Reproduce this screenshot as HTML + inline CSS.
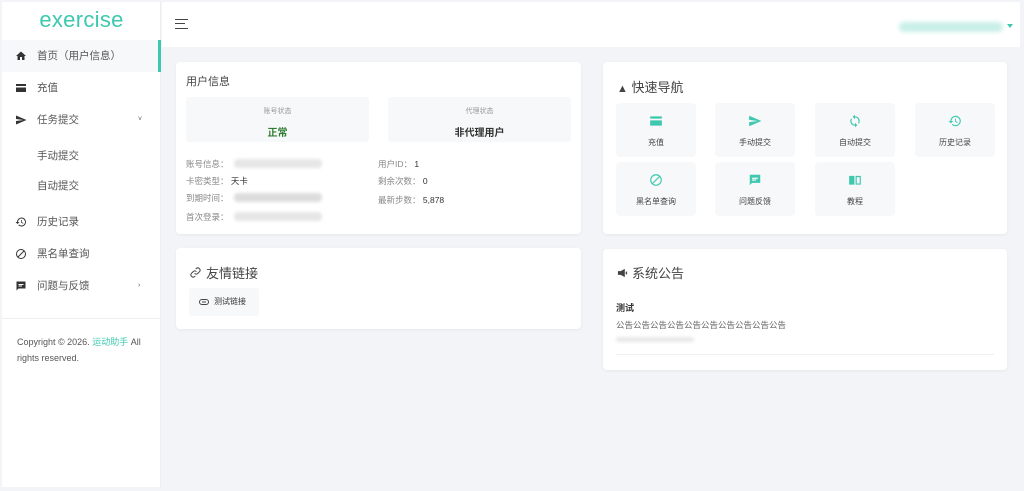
<!DOCTYPE html>
<html><head><meta charset="utf-8"><style>
*{box-sizing:border-box;margin:0;padding:0}
body{width:1024px;height:491px;background:#f3f4f7;font-family:"Liberation Sans","Noto Sans CJK SC",sans-serif;color:#444;position:relative;overflow:hidden;font-size:10px}
.side{position:absolute;left:2px;top:2px;width:159px;height:485px;background:#fff;border-right:1px solid #eceef1}
.logo{position:absolute;left:0;width:159px;top:5px;text-align:center;color:#3ec8b0;font-size:22px;letter-spacing:.3px}
.item{position:absolute;left:0;width:159px;height:32px;line-height:32px;font-size:10.5px;color:#555}
.item svg{position:absolute;left:13px;top:10px}
.item span{position:absolute;left:35px}
.act{background:#f7f8f9;border-right:3px solid #3ec8b0}
.hdr{position:absolute;left:162px;top:2px;width:858px;height:45px;background:#fff}
.card{position:absolute;background:#fff;border-radius:4px;box-shadow:0 1px 3px rgba(0,0,0,.05)}
.blur{position:absolute;height:9px;background:#e6e6e6;border-radius:4px;filter:blur(1.5px)}
.stat{position:absolute;top:35px;width:183px;height:45px;background:#f7f8f9;border-radius:3px;text-align:center}
.stat .t{font-size:7px;color:#999;margin-top:9px}
.stat .v{font-size:10px;font-weight:bold;margin-top:8px}
.lbl{position:absolute;font-size:8.5px;color:#888}
.lbl b{font-weight:normal;color:#333}
.nav{position:absolute;width:80px;height:54px;background:#f7f8f9;border-radius:4px;text-align:center}
.nav svg{position:absolute;left:33px;top:11px}
.nav div{position:absolute;top:34px;width:80px;font-size:8px;color:#444}
h3{position:absolute;font-weight:normal;color:#444}
</style></head><body>
<div class="side">
<div class="logo">exercise</div>
<div class="item act" style="top:38px"><svg width="12" height="12" viewBox="0 0 24 24"><path d="M10 20v-6h4v6h5v-8h3L12 3 2 12h3v8z" fill="#333"/></svg><span>首页（用户信息）</span></div>
<div class="item" style="top:70px"><svg width="12" height="12" viewBox="0 0 24 24"><path d="M2 4h20v16H2zM2 8v3h20V8z" fill="#333" fill-rule="evenodd"/></svg><span>充值</span></div>
<div class="item" style="top:102px"><svg width="12" height="12" viewBox="0 0 24 24"><path d="M2 21l21-9L2 3v7l15 2-15 2z" fill="#333"/></svg><span>任务提交</span><span style="left:136px;font-size:7px">˅</span></div>
<div class="item" style="top:138px"><span>手动提交</span></div>
<div class="item" style="top:168px"><span>自动提交</span></div>
<div class="item" style="top:204px"><svg width="12" height="12" viewBox="0 0 24 24"><path d="M13 3a9 9 0 0 0-9 9H1l4 4 4-4H6a7 7 0 1 1 2 5l-1.4 1.4A9 9 0 1 0 13 3zm-1 5v5l4 2.5.8-1.3-3.3-2V8z" fill="#333"/></svg><span>历史记录</span></div>
<div class="item" style="top:236px"><svg width="12" height="12" viewBox="0 0 24 24"><circle cx="12" cy="12" r="9" fill="none" stroke="#333" stroke-width="2"/><path d="M6 18L18 6" stroke="#333" stroke-width="2"/></svg><span>黑名单查询</span></div>
<div class="item" style="top:268px"><svg width="12" height="12" viewBox="0 0 24 24"><path d="M3 3h18v14H7l-4 4zM7 8h10v2H7zm0 3h7v2H7z" fill="#333" fill-rule="evenodd"/></svg><span>问题与反馈</span><span style="left:136px;font-size:7px">›</span></div>
<div style="position:absolute;top:316px;left:0;width:159px;border-top:1px solid #eee"></div>
<div style="position:absolute;top:332px;left:15px;width:140px;font-size:9px;line-height:16px;color:#555">Copyright © 2026. <span style="color:#3ec8b0">运动助手</span> All rights reserved.</div>
</div>
<div class="hdr">
<div style="position:absolute;left:13px;top:17px;width:13px;height:10px;border-top:1.5px solid #444;border-bottom:1.5px solid #444"><div style="margin-top:3px;width:10px;border-top:1.5px solid #444"></div></div>
<div style="position:absolute;left:737px;top:20px;width:104px;height:10px;background:#c8efe8;border-radius:5px;filter:blur(2px)"></div>
<div style="position:absolute;left:845px;top:22px;border:3px solid transparent;border-top:4px solid #3ec8b0"></div>
</div>

<div class="card" style="left:176px;top:62px;width:405px;height:172px">
<h3 style="left:10px;top:11px;font-size:11px">用户信息</h3>
<div class="stat" style="left:10px"><div class="t">账号状态</div><div class="v" style="color:#2e7d32">正常</div></div>
<div class="stat" style="left:212px"><div class="t">代理状态</div><div class="v" style="color:#333">非代理用户</div></div>
<div class="lbl" style="left:10px;top:96px">账号信息：</div><div class="blur" style="left:58px;top:97px;width:88px"></div>
<div class="lbl" style="left:10px;top:113px">卡密类型： <b>天卡</b></div>
<div class="lbl" style="left:10px;top:130px">到期时间：</div><div class="blur" style="left:58px;top:131px;width:88px;background:#ddd"></div>
<div class="lbl" style="left:10px;top:149px">首次登录：</div><div class="blur" style="left:58px;top:150px;width:88px"></div>
<div class="lbl" style="left:202px;top:96px">用户ID： <b>1</b></div>
<div class="lbl" style="left:202px;top:113px">剩余次数： <b>0</b></div>
<div class="lbl" style="left:202px;top:132px">最新步数： <b>5,878</b></div>
</div>

<div class="card" style="left:603px;top:62px;width:404px;height:172px">
<h3 style="left:14px;top:15px;font-size:13px"><span style="font-size:11px">▲</span> 快速导航</h3>
<div class="nav" style="left:13px;top:41px"><svg width="14" height="14" viewBox="0 0 24 24"><path d="M2 4h20v16H2zM2 8v3h20V8z" fill="#3ec8b0" fill-rule="evenodd"/></svg><div>充值</div></div>
<div class="nav" style="left:112px;top:41px"><svg width="14" height="14" viewBox="0 0 24 24"><path d="M2 21l21-9L2 3v7l15 2-15 2z" fill="#3ec8b0"/></svg><div>手动提交</div></div>
<div class="nav" style="left:212px;top:41px"><svg width="14" height="14" viewBox="0 0 24 24"><path d="M12 4V1L8 5l4 4V6a6 6 0 0 1 5.2 9l1.5 1.5A8 8 0 0 0 12 4zm0 14a6 6 0 0 1-5.2-9L5.3 7.5A8 8 0 0 0 12 20v3l4-4-4-4z" fill="#3ec8b0"/></svg><div>自动提交</div></div>
<div class="nav" style="left:312px;top:41px"><svg width="14" height="14" viewBox="0 0 24 24"><path d="M13 3a9 9 0 0 0-9 9H1l4 4 4-4H6a7 7 0 1 1 2 5l-1.4 1.4A9 9 0 1 0 13 3zm-1 5v5l4 2.5.8-1.3-3.3-2V8z" fill="#3ec8b0"/></svg><div>历史记录</div></div>
<div class="nav" style="left:13px;top:100px"><svg width="14" height="14" viewBox="0 0 24 24"><circle cx="12" cy="12" r="9" fill="none" stroke="#3ec8b0" stroke-width="2"/><path d="M6 18L18 6" stroke="#3ec8b0" stroke-width="2"/></svg><div>黑名单查询</div></div>
<div class="nav" style="left:112px;top:100px"><svg width="14" height="14" viewBox="0 0 24 24"><path d="M3 3h18v14H7l-4 4zM7 8h10v2H7zm0 3h7v2H7z" fill="#3ec8b0" fill-rule="evenodd"/></svg><div>问题反馈</div></div>
<div class="nav" style="left:212px;top:100px"><svg width="14" height="14" viewBox="0 0 24 24"><path d="M2 5h9v15H2zm11 0h9v15h-9zm2 2v11h5V7z" fill="#3ec8b0" fill-rule="evenodd"/></svg><div>教程</div></div>
</div>

<div class="card" style="left:176px;top:248px;width:405px;height:81px">
<svg style="position:absolute;left:14px;top:19px" width="11" height="11" viewBox="0 0 24 24"><path d="M10 14a5 5 0 0 0 7 0l4-4a5 5 0 0 0-7-7l-1.5 1.5M14 10a5 5 0 0 0-7 0l-4 4a5 5 0 0 0 7 7l1.5-1.5" fill="none" stroke="#444" stroke-width="2.2"/></svg>
<h3 style="left:30px;top:15px;font-size:13px">友情链接</h3>
<div style="position:absolute;left:13px;top:40px;width:70px;height:28px;background:#f7f8f9;border-radius:3px;font-size:8px;line-height:28px;color:#333;padding-left:25px">测试链接</div>
<svg style="position:absolute;left:23px;top:51px" width="10" height="6" viewBox="0 0 20 12"><rect x="1" y="1" width="18" height="10" rx="5" fill="none" stroke="#444" stroke-width="2"/><path d="M6 6h8" stroke="#444" stroke-width="2"/></svg>
</div>

<div class="card" style="left:603px;top:249px;width:404px;height:121px">
<svg style="position:absolute;left:14px;top:19px" width="11" height="10" viewBox="0 0 24 20"><path d="M2 6h6l9-5v18l-9-5H2zM19 7h3v6h-3z" fill="#444"/></svg>
<h3 style="left:29px;top:14px;font-size:13px">系统公告</h3>
<div style="position:absolute;left:13px;top:52px;font-size:9px;font-weight:bold;color:#333">测试</div>
<div style="position:absolute;left:13px;top:70px;font-size:8.5px;color:#666">公告公告公告公告公告公告公告公告公告公告</div>
<div class="blur" style="left:13px;top:88px;width:78px;height:5px;background:#e8e8e8"></div>
<div style="position:absolute;left:13px;right:13px;top:105px;border-top:1px solid #f0f0f0"></div>
</div>
</body></html>
